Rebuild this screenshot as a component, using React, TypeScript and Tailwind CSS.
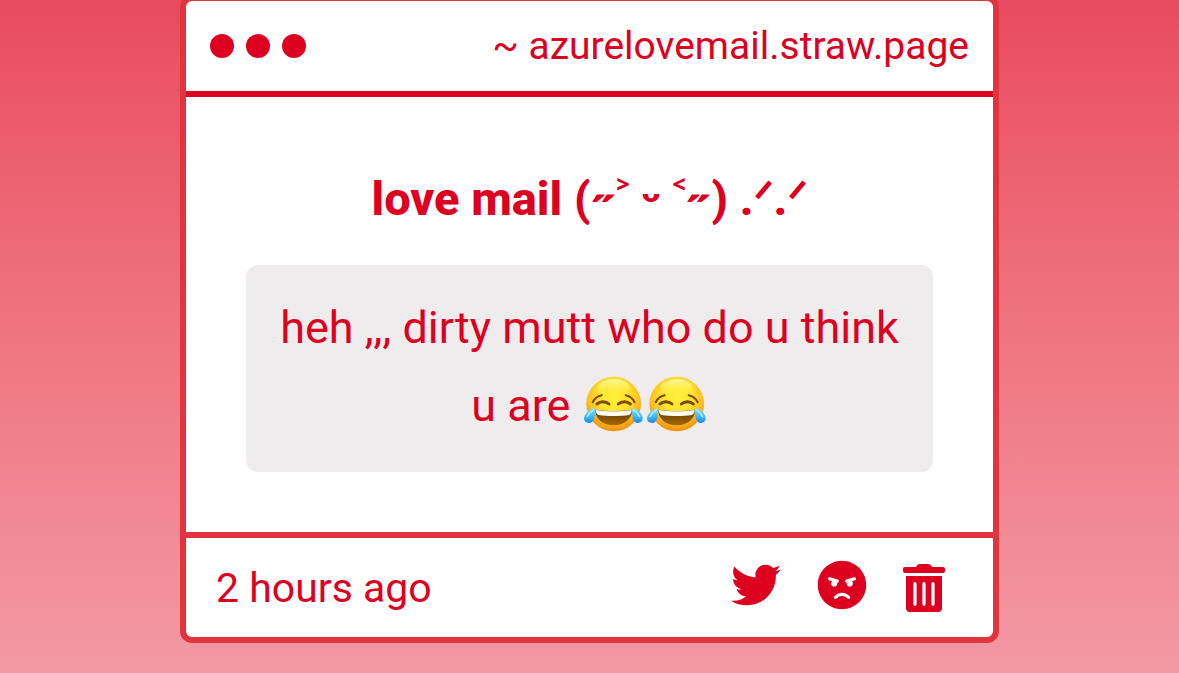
import { FaAngry, FaTwitter } from "react-icons/fa";

function JoyEmoji({ id }: { id: string }) {
  return (
    <svg
      viewBox="0 0 189 174"
      role="img"
      aria-label="face with tears of joy"
      className="inline-block h-[58px] w-[63px] align-[-12px]"
    >
      <defs>
        <radialGradient id={`${id}-face`} cx="0.5" cy="0.36" r="0.65">
          <stop offset="0" stopColor="#fff23a" />
          <stop offset="0.45" stopColor="#ffe22f" />
          <stop offset="0.75" stopColor="#fdb91f" />
          <stop offset="1" stopColor="#ee8a0c" />
        </radialGradient>
        <linearGradient id={`${id}-shine`} x1="0" y1="0" x2="0" y2="1">
          <stop offset="0" stopColor="#fff9a0" />
          <stop offset="1" stopColor="#fff13c" stopOpacity="0" />
        </linearGradient>
        <linearGradient id={`${id}-tear`} x1="0" y1="0" x2="0" y2="1">
          <stop offset="0" stopColor="#8fe4fb" />
          <stop offset="0.55" stopColor="#45bdf5" />
          <stop offset="1" stopColor="#1787e8" />
        </linearGradient>
        <linearGradient id={`${id}-mouth`} x1="0" y1="0" x2="0" y2="1">
          <stop offset="0" stopColor="#5d3503" />
          <stop offset="1" stopColor="#a86a05" />
        </linearGradient>
      </defs>
      <circle cx="95" cy="87" r="82" fill={`url(#${id}-face)`} />
      <ellipse cx="95" cy="38" rx="48" ry="25" fill={`url(#${id}-shine)`} />
      <g fill="none" stroke="#7d4a03" strokeLinecap="round">
        <path d="M32 82c5-11 14-18 27-21" strokeWidth="6" />
        <path d="M158 82c-5-11-14-18-27-21" strokeWidth="6" />
        <path d="M45 87c9-9 26-9 36 0" strokeWidth="9" />
        <path d="M109 87c10-9 27-9 36 0" strokeWidth="9" />
      </g>
      <path
        d="M40 104c34 5 76 5 110 0 2 23-20 47-55 47s-57-24-55-47z"
        fill={`url(#${id}-mouth)`}
      />
      <path
        d="M41 105c34 5 74 5 108 0 0 7-3 13-8 15-28 4-64 4-92 0-5-2-8-8-8-15z"
        fill="#fffdf7"
      />
      <path
        d="M39 98C25 100 6 116 6 130c0 9 7 14 15 14 15 0 20-20 18-46z"
        fill={`url(#${id}-tear)`}
      />
      <path
        d="M151 98c14 2 31 18 31 32 0 9-7 14-15 14-14 0-19-20-16-46z"
        fill={`url(#${id}-tear)`}
      />
      <path
        d="M34 105c-8 5-15 12-19 20M155 105c8 5 14 12 18 20"
        fill="none"
        stroke="#b9f1ff"
        strokeLinecap="round"
        strokeWidth="4"
      />
    </svg>
  );
}

function TrashIcon() {
  return (
    <svg viewBox="0 -4 42 52" fill="currentColor" className="h-[52px] w-[42px]">
      <path d="M2 3h11c1-2 2-3 4-3h8c2 0 3 1 4 3h11q2 0 2 2v2q0 2-2 2H2q-2 0-2-2V5q0-2 2-2z" />
      <path
        fillRule="evenodd"
        d="M3 12h36v32q0 4-4 4H7q-4 0-4-4zM12 18q-1.600 0-1.600 2v20q0 2 1.600 2t1.600-2V20q0-2-1.600-2zM21 18q-1.600 0-1.600 2v20q0 2 1.600 2t1.600-2V20q0-2-1.600-2zM30 18q-1.600 0-1.600 2v20q0 2 1.600 2t1.600-2V20q0-2-1.600-2z"
      />
    </svg>
  );
}

export default function App() {
  return (
    <main className="flow-root min-h-screen overflow-hidden bg-linear-to-b from-[#e94a5f] to-[#f299a4] font-[Roboto,'Noto_Sans',sans-serif] text-[#dd001f]">
      <article className="mx-auto -mt-[5px] w-full max-w-[819px] rounded-xl border-6 border-[#e2343f] bg-white">
        <header className="flex h-24 items-center justify-between border-b-6 border-[#dd001f] px-6">
          <div className="flex gap-3">
            <span className="size-6 rounded-full bg-current" />
            <span className="size-6 rounded-full bg-current" />
            <span className="size-6 rounded-full bg-current" />
          </div>
          <a href="#page" className="text-[39px] leading-[48px]">
            ~ azurelovemail.straw.page
          </a>
        </header>

        <section className="px-15 pt-[70px] pb-15 text-center">
          <h1 className="text-[47px] leading-[64px] font-extrabold">
            love mail (˶˃ ᵕ ˂˶) .ᐟ.ᐟ
          </h1>
          <p className="mt-[34px] rounded-xl bg-[#eeeced] px-8 pt-6 pb-[27px] text-[45px] leading-[78px]">
            heh ,,, dirty mutt who do u think u are{" "}
            <span className="whitespace-nowrap">
              <JoyEmoji id="joy-one" />
              <JoyEmoji id="joy-two" />
            </span>
          </p>
        </section>

        <footer className="flex h-[105px] items-center justify-between border-t-6 border-[#e2343f] pr-12 pl-[30px]">
          <time className="text-[41px] leading-[48px]">2 hours ago</time>
          <div className="flex items-start gap-9 pb-1">
            <button type="button" aria-label="Share on Twitter">
              <FaTwitter className="size-[50px]" />
            </button>
            <button type="button" aria-label="Report">
              <FaAngry className="size-[50px]" />
            </button>
            <button type="button" aria-label="Delete">
              <TrashIcon />
            </button>
          </div>
        </footer>
      </article>
    </main>
  );
}
